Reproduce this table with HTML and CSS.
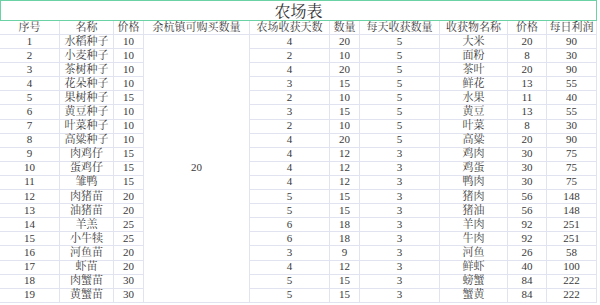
FILE: index.html
```html
<!DOCTYPE html>
<html lang="zh-CN">
<head>
<meta charset="utf-8">
<title>农场表</title>
<link rel="stylesheet" href="styles.css">
</head>
<body>
<div class="sheet">
  <div class="title">农场表</div>
  <div class="grid">
    <div class="c">序号</div><div class="c">名称</div><div class="c">价格</div><div class="c">余杭镇可购买数量</div><div class="c">农场收获天数</div><div class="c">数量</div><div class="c">每天收获数量</div><div class="c">收获物名称</div><div class="c">价格</div><div class="c">每日利润</div>
    <div class="c merged">20</div>
    <div class="c">1</div><div class="c">水稻种子</div><div class="c">10</div><div class="c">4</div><div class="c">20</div><div class="c">5</div><div class="c">大米</div><div class="c">20</div><div class="c">90</div>
    <div class="c">2</div><div class="c">小麦种子</div><div class="c">10</div><div class="c">2</div><div class="c">10</div><div class="c">5</div><div class="c">面粉</div><div class="c">8</div><div class="c">30</div>
    <div class="c">3</div><div class="c">茶树种子</div><div class="c">10</div><div class="c">4</div><div class="c">20</div><div class="c">5</div><div class="c">茶叶</div><div class="c">20</div><div class="c">90</div>
    <div class="c">4</div><div class="c">花朵种子</div><div class="c">10</div><div class="c">3</div><div class="c">15</div><div class="c">5</div><div class="c">鲜花</div><div class="c">13</div><div class="c">55</div>
    <div class="c">5</div><div class="c">果树种子</div><div class="c">15</div><div class="c">2</div><div class="c">10</div><div class="c">5</div><div class="c">水果</div><div class="c">11</div><div class="c">40</div>
    <div class="c">6</div><div class="c">黄豆种子</div><div class="c">10</div><div class="c">3</div><div class="c">15</div><div class="c">5</div><div class="c">黄豆</div><div class="c">13</div><div class="c">55</div>
    <div class="c">7</div><div class="c">叶菜种子</div><div class="c">10</div><div class="c">2</div><div class="c">10</div><div class="c">5</div><div class="c">叶菜</div><div class="c">8</div><div class="c">30</div>
    <div class="c">8</div><div class="c">高粱种子</div><div class="c">10</div><div class="c">4</div><div class="c">20</div><div class="c">5</div><div class="c">高粱</div><div class="c">20</div><div class="c">90</div>
    <div class="c">9</div><div class="c">肉鸡仔</div><div class="c">15</div><div class="c">4</div><div class="c">12</div><div class="c">3</div><div class="c">鸡肉</div><div class="c">30</div><div class="c">75</div>
    <div class="c">10</div><div class="c">蛋鸡仔</div><div class="c">15</div><div class="c">4</div><div class="c">12</div><div class="c">3</div><div class="c">鸡蛋</div><div class="c">30</div><div class="c">75</div>
    <div class="c">11</div><div class="c">雏鸭</div><div class="c">15</div><div class="c">4</div><div class="c">12</div><div class="c">3</div><div class="c">鸭肉</div><div class="c">30</div><div class="c">75</div>
    <div class="c">12</div><div class="c">肉猪苗</div><div class="c">20</div><div class="c">5</div><div class="c">15</div><div class="c">3</div><div class="c">猪肉</div><div class="c">56</div><div class="c">148</div>
    <div class="c">13</div><div class="c">油猪苗</div><div class="c">20</div><div class="c">5</div><div class="c">15</div><div class="c">3</div><div class="c">猪油</div><div class="c">56</div><div class="c">148</div>
    <div class="c">14</div><div class="c">羊羔</div><div class="c">25</div><div class="c">6</div><div class="c">18</div><div class="c">3</div><div class="c">羊肉</div><div class="c">92</div><div class="c">251</div>
    <div class="c">15</div><div class="c">小牛犊</div><div class="c">25</div><div class="c">6</div><div class="c">18</div><div class="c">3</div><div class="c">牛肉</div><div class="c">92</div><div class="c">251</div>
    <div class="c">16</div><div class="c">河鱼苗</div><div class="c">20</div><div class="c">3</div><div class="c">9</div><div class="c">3</div><div class="c">河鱼</div><div class="c">26</div><div class="c">58</div>
    <div class="c">17</div><div class="c">虾苗</div><div class="c">20</div><div class="c">4</div><div class="c">12</div><div class="c">3</div><div class="c">鲜虾</div><div class="c">40</div><div class="c">100</div>
    <div class="c">18</div><div class="c">肉蟹苗</div><div class="c">30</div><div class="c">5</div><div class="c">15</div><div class="c">3</div><div class="c">螃蟹</div><div class="c">84</div><div class="c">222</div>
    <div class="c">19</div><div class="c">黄蟹苗</div><div class="c">30</div><div class="c">5</div><div class="c">15</div><div class="c">3</div><div class="c">蟹黄</div><div class="c">84</div><div class="c">222</div>
  </div>
</div>
</body>
</html>
```

FILE: styles.css
```css
html, body {
  margin: 0;
  padding: 0;
  background: #ffffff;
}

.sheet {
  width: 597px;
  font-family: "Liberation Serif", "Noto Serif CJK SC", "Noto Sans CJK SC", serif;
  color: #3a3a3a;
}

.title {
  box-sizing: border-box;
  height: 21px;
  border: 1px solid #6ad2a4;
  display: flex;
  align-items: center;
  justify-content: center;
  font-size: 16px;
  color: #333333;
}

.grid {
  display: grid;
  grid-template-columns: 60px 54px 30px 106px 80px 30px 80px 68px 39px 50px;
  grid-template-rows: 14px repeat(19, 14.1px);
}

.c {
  box-sizing: border-box;
  border-right: 1px solid #e1e4f0;
  border-bottom: 1px solid #e1e4f0;
  display: flex;
  align-items: center;
  justify-content: center;
  font-size: 11px;
  line-height: 1;
  white-space: nowrap;
  padding-bottom: 1px;
}

.merged {
  grid-column: 4;
  grid-row: 2 / span 19;
}
```
